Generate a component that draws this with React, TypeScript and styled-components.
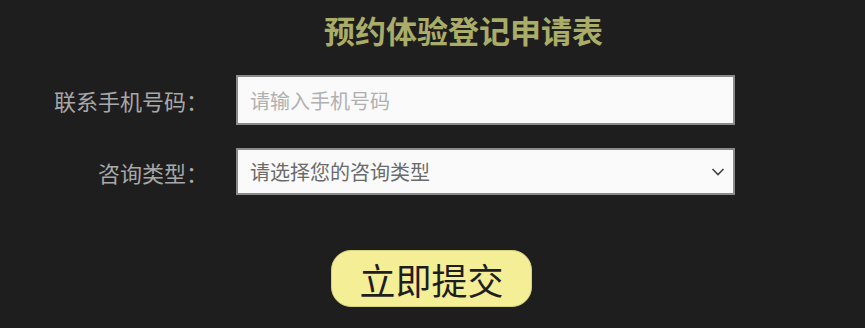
import React, {useState} from "react"
import styled, {createGlobalStyle} from "styled-components"

const GlobalStyle = createGlobalStyle`
  html, body {
    margin: 0;
    padding: 0;
    background: #1e1e1e;
  }
  body {
    font-family: "Noto Sans CJK SC", "Noto Sans", sans-serif;
  }
`

const Page = styled.div`
  width: 865px;
  height: 328px;
  padding-top: 8px;
  box-sizing: border-box;
  background: #1e1e1e;
`

const Title = styled.h1`
  margin: 0 0 23px;
  padding-left: 62px;
  font-size: 31px;
  line-height: 44px;
  font-weight: 700;
  text-align: center;
  color: #a9ad68;
`

const Form = styled.form`
  display: grid;
  grid-template-columns: 208px 499px;
  column-gap: 28px;
  row-gap: 23px;
  align-items: center;
`

const Label = styled.label`
  text-align: right;
  font-size: 22px;
  color: #a8a8a8;
`

const Input = styled.input`
  height: 50px;
  box-sizing: border-box;
  padding: 0 12px;
  border: 2px solid #8a8a8a;
  background: #fafafa;
  font-family: inherit;
  font-size: 20px;
  color: #222;
  outline: none;

  &::placeholder {
    color: #b0b0b0;
  }
`

const SelectWrap = styled.div`
  position: relative;
  height: 47px;
`

const Select = styled.select`
  appearance: none;
  width: 100%;
  height: 100%;
  box-sizing: border-box;
  padding: 0 12px;
  border: 2px solid #8a8a8a;
  background: #fafafa;
  font-family: inherit;
  font-size: 20px;
  color: #6a6a6a;
  outline: none;
`

const Chevron = styled.svg`
  position: absolute;
  right: 10px;
  top: 50%;
  transform: translateY(-50%);
  pointer-events: none;
`

const Actions = styled.div`
  display: flex;
  justify-content: center;
  padding-right: 2px;
  margin-top: 55px;
`

const SubmitButton = styled.button`
  height: 57px;
  padding: 0 27px;
  border: 1px solid #d8d27c;
  border-radius: 20px;
  background: #f4ee97;
  color: #1e1e1e;
  font-family: inherit;
  font-size: 36px;
  line-height: 1;
  cursor: pointer;
`

export default function App() {
    const [phone, setPhone] = useState<string>("")
    const [type, setType] = useState<string>("")

    return (
        <>
            <GlobalStyle/>
            <Page>
                <Title>预约体验登记申请表</Title>
                <Form onSubmit={e => e.preventDefault()}>
                    <Label htmlFor="phone">联系手机号码：</Label>
                    <Input id="phone" value={phone} placeholder="请输入手机号码"
                           onChange={e => setPhone(e.currentTarget.value)}/>
                    <Label htmlFor="type">咨询类型：</Label>
                    <SelectWrap>
                        <Select id="type" value={type} onChange={e => setType(e.currentTarget.value)}>
                            <option value="">请选择您的咨询类型</option>
                            <option value="a">课程咨询</option>
                            <option value="b">售后服务</option>
                        </Select>
                        <Chevron width="14" height="9" viewBox="0 0 14 9">
                            <path d="M1.5 1.5 L7 7 L12.5 1.5" fill="none" stroke="#444" strokeWidth="1.6"/>
                        </Chevron>
                    </SelectWrap>
                </Form>
                <Actions>
                    <SubmitButton type="button">立即提交</SubmitButton>
                </Actions>
            </Page>
        </>
    )
}
